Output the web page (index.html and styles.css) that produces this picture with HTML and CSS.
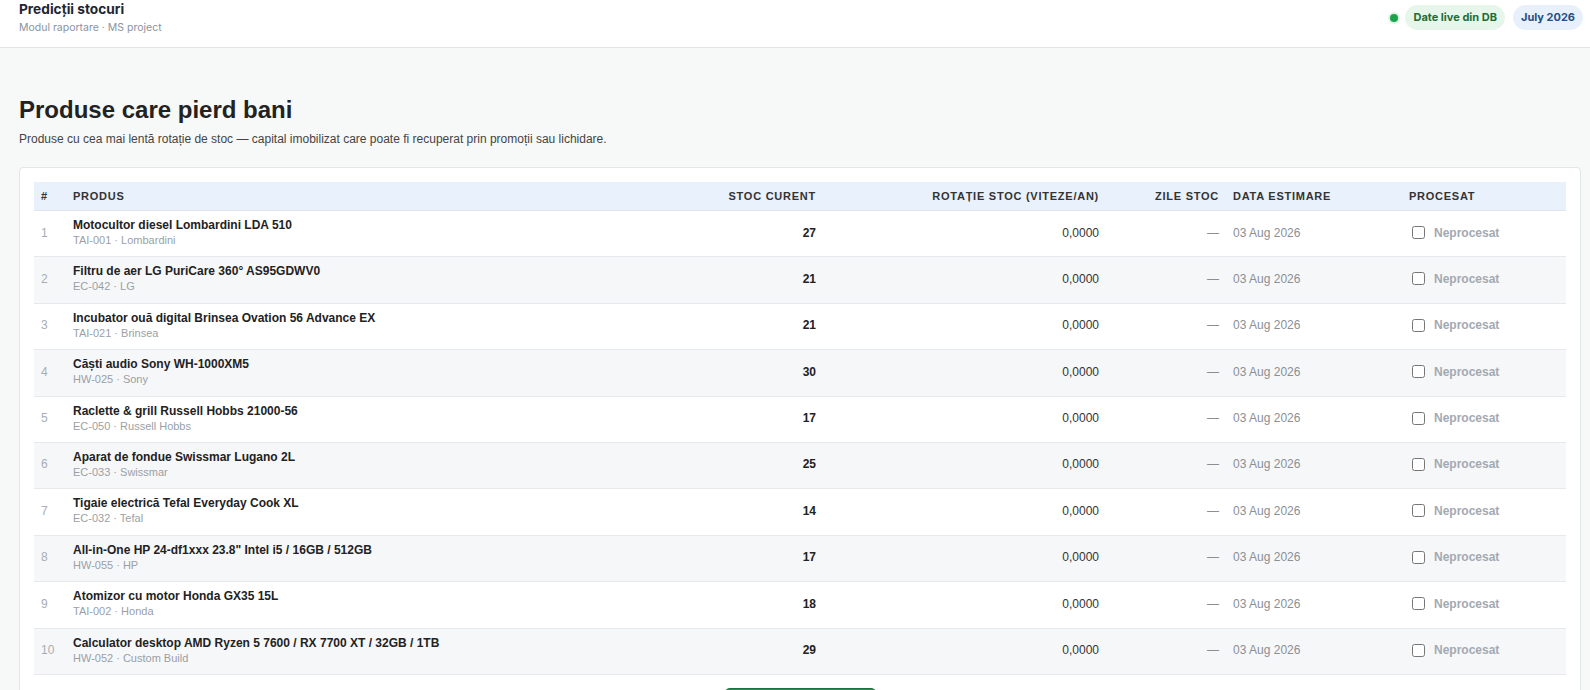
FILE: index.html
```html
<!DOCTYPE html>
<html lang="ro">
<head>
    <meta charset="UTF-8">
    <meta name="viewport" content="width=device-width, initial-scale=1.0">
    <title>Predicții stocuri</title>
    <link rel="stylesheet" href="styles.css">
</head>
<body>
    <header class="topbar">
        <div class="brand">
            <div class="brand-title">Predicții stocuri</div>
            <div class="brand-sub">Modul raportare · MS project</div>
        </div>
        <div class="status">
            <span class="dot"></span>
            <span class="pill pill-green">Date live din DB</span>
            <span class="pill pill-blue">July 2026</span>
        </div>
    </header>

    <main class="page">
        <h1>Produse care pierd bani</h1>
        <p class="lead">Produse cu cea mai lentă rotație de stoc — capital imobilizat care poate fi recuperat prin promoții sau lichidare.</p>

        <div class="card">
            <table class="grid">
                <colgroup>
                    <col class="c-idx">
                    <col class="c-prod">
                    <col class="c-stoc">
                    <col class="c-rot">
                    <col class="c-zile">
                    <col class="c-data">
                    <col class="c-proc">
                </colgroup>
                <thead>
                    <tr>
                        <th>#</th>
                        <th>Produs</th>
                        <th class="num">Stoc curent</th>
                        <th class="num">Rotație stoc (viteze/an)</th>
                        <th class="num">Zile stoc</th>
                        <th>Data estimare</th>
                        <th>Procesat</th>
                    </tr>
                </thead>
                <tbody>
                    <tr>
                        <td class="idx">1</td>
                        <td><div class="name">Motocultor diesel Lombardini LDA 510</div><div class="meta">TAI-001 · Lombardini</div></td>
                        <td class="num stock">27</td>
                        <td class="num">0,0000</td>
                        <td class="num muted">—</td>
                        <td class="muted">03 Aug 2026</td>
                        <td><label class="check"><input type="checkbox"> Neprocesat</label></td>
                    </tr>
                    <tr>
                        <td class="idx">2</td>
                        <td><div class="name">Filtru de aer LG PuriCare 360° AS95GDWV0</div><div class="meta">EC-042 · LG</div></td>
                        <td class="num stock">21</td>
                        <td class="num">0,0000</td>
                        <td class="num muted">—</td>
                        <td class="muted">03 Aug 2026</td>
                        <td><label class="check"><input type="checkbox"> Neprocesat</label></td>
                    </tr>
                    <tr>
                        <td class="idx">3</td>
                        <td><div class="name">Incubator ouă digital Brinsea Ovation 56 Advance EX</div><div class="meta">TAI-021 · Brinsea</div></td>
                        <td class="num stock">21</td>
                        <td class="num">0,0000</td>
                        <td class="num muted">—</td>
                        <td class="muted">03 Aug 2026</td>
                        <td><label class="check"><input type="checkbox"> Neprocesat</label></td>
                    </tr>
                    <tr>
                        <td class="idx">4</td>
                        <td><div class="name">Căști audio Sony WH-1000XM5</div><div class="meta">HW-025 · Sony</div></td>
                        <td class="num stock">30</td>
                        <td class="num">0,0000</td>
                        <td class="num muted">—</td>
                        <td class="muted">03 Aug 2026</td>
                        <td><label class="check"><input type="checkbox"> Neprocesat</label></td>
                    </tr>
                    <tr>
                        <td class="idx">5</td>
                        <td><div class="name">Raclette &amp; grill Russell Hobbs 21000-56</div><div class="meta">EC-050 · Russell Hobbs</div></td>
                        <td class="num stock">17</td>
                        <td class="num">0,0000</td>
                        <td class="num muted">—</td>
                        <td class="muted">03 Aug 2026</td>
                        <td><label class="check"><input type="checkbox"> Neprocesat</label></td>
                    </tr>
                    <tr>
                        <td class="idx">6</td>
                        <td><div class="name">Aparat de fondue Swissmar Lugano 2L</div><div class="meta">EC-033 · Swissmar</div></td>
                        <td class="num stock">25</td>
                        <td class="num">0,0000</td>
                        <td class="num muted">—</td>
                        <td class="muted">03 Aug 2026</td>
                        <td><label class="check"><input type="checkbox"> Neprocesat</label></td>
                    </tr>
                    <tr>
                        <td class="idx">7</td>
                        <td><div class="name">Tigaie electrică Tefal Everyday Cook XL</div><div class="meta">EC-032 · Tefal</div></td>
                        <td class="num stock">14</td>
                        <td class="num">0,0000</td>
                        <td class="num muted">—</td>
                        <td class="muted">03 Aug 2026</td>
                        <td><label class="check"><input type="checkbox"> Neprocesat</label></td>
                    </tr>
                    <tr>
                        <td class="idx">8</td>
                        <td><div class="name">All-in-One HP 24-df1xxx 23.8" Intel i5 / 16GB / 512GB</div><div class="meta">HW-055 · HP</div></td>
                        <td class="num stock">17</td>
                        <td class="num">0,0000</td>
                        <td class="num muted">—</td>
                        <td class="muted">03 Aug 2026</td>
                        <td><label class="check"><input type="checkbox"> Neprocesat</label></td>
                    </tr>
                    <tr>
                        <td class="idx">9</td>
                        <td><div class="name">Atomizor cu motor Honda GX35 15L</div><div class="meta">TAI-002 · Honda</div></td>
                        <td class="num stock">18</td>
                        <td class="num">0,0000</td>
                        <td class="num muted">—</td>
                        <td class="muted">03 Aug 2026</td>
                        <td><label class="check"><input type="checkbox"> Neprocesat</label></td>
                    </tr>
                    <tr>
                        <td class="idx">10</td>
                        <td><div class="name">Calculator desktop AMD Ryzen 5 7600 / RX 7700 XT / 32GB / 1TB</div><div class="meta">HW-052 · Custom Build</div></td>
                        <td class="num stock">29</td>
                        <td class="num">0,0000</td>
                        <td class="num muted">—</td>
                        <td class="muted">03 Aug 2026</td>
                        <td><label class="check"><input type="checkbox"> Neprocesat</label></td>
                    </tr>
                </tbody>
            </table>
            <div class="actions">
                <button class="save">Salvează modificările</button>
            </div>
        </div>
    </main>
</body>
</html>
```

FILE: styles.css
```css
body {
    margin: 0;
    background-color: #f7f8f8;
    font-family: "Liberation Sans", Arial, sans-serif;
    color: #222;
}
.topbar {
    display: flex;
    justify-content: space-between;
    align-items: flex-start;
    height: 47px;
    padding: 0 7px 0 19px;
    background-color: #fff;
    border-bottom: 1px solid #e2e5e8;
    font-family: Inter, "Noto Sans", sans-serif;
}
.brand-title {
    font-size: 13.7px;
    font-weight: 700;
    line-height: 18px;
    color: #1d2633;
}
.brand-sub {
    margin-top: 2px;
    font-size: 10.5px;
    line-height: 15px;
    color: #8a939e;
}
.status {
    display: flex;
    align-items: center;
    gap: 8px;
    margin-top: 5px;
}
.dot {
    width: 8px;
    height: 8px;
    border-radius: 50%;
    background-color: #1aa34a;
    box-shadow: 0 0 0 2px #dff3e5;
    margin-right: -1px;
}
.pill {
    display: inline-block;
    height: 25px;
    line-height: 25px;
    padding: 0 8px;
    border-radius: 13px;
    font-size: 11px;
    font-weight: 700;
}
.pill-green {
    background-color: #e7f6eb;
    color: #1c6e38;
}
.pill-blue {
    background-color: #e8f1fb;
    color: #1f4f86;
}
.page {
    padding: 48px 9px 0 19px;
}
h1 {
    margin: 0;
    font-size: 24px;
    line-height: 28px;
    font-weight: 700;
    color: #222;
}
.lead {
    margin: 7px 0 0;
    font-size: 12px;
    line-height: 16px;
    color: #444;
}
.card {
    margin-top: 20px;
    padding: 14px 14px 0;
    background-color: #fff;
    border: 1px solid #e3e6e9;
    border-radius: 4px;
}
.grid {
    width: 100%;
    border-collapse: collapse;
    table-layout: fixed;
}
.c-idx { width: 32px; }
.c-stoc { width: 150px; }
.c-rot { width: 283px; }
.c-zile { width: 120px; }
.c-data { width: 176px; }
.c-proc { width: 164px; }
.grid th {
    padding: 8px 7px;
    background-color: #e9f1fc;
    border-bottom: 1px solid #dfe6ef;
    text-align: left;
    font-size: 11px;
    line-height: 12px;
    font-weight: 700;
    letter-spacing: 0.75px;
    text-transform: uppercase;
    color: #333;
}
.grid td {
    padding: 6px 7px 8.4px;
    border-bottom: 1px solid #e6e8eb;
    font-size: 12px;
    line-height: 16px;
    color: #333;
    vertical-align: middle;
}
.grid tbody tr:nth-child(even) td {
    background-color: #f6f7f9;
}
.grid .num {
    text-align: right;
}
.grid .idx {
    color: #a9adb2;
}
.name {
    font-weight: 700;
    color: #222;
}
.meta {
    font-size: 11px;
    line-height: 15px;
    color: #9a9fa5;
}
.grid .stock {
    font-weight: 700;
    color: #222;
}
.grid .muted {
    color: #8a8f95;
}
.check {
    display: flex;
    align-items: center;
    gap: 9px;
    font-weight: 700;
    color: #a3a9b1;
}
.check input {
    margin: 0 0 0 3px;
    width: 13px;
    height: 13px;
}
.actions {
    display: flex;
    justify-content: center;
    padding: 13px 0 15px;
}
.save {
    width: 153px;
    padding: 9px 0;
    border: 1px solid #1f6e42;
    border-radius: 6px;
    background-color: #2c8a55;
    color: #fff;
    font-family: inherit;
    font-size: 12px;
    font-weight: 700;
}
```
